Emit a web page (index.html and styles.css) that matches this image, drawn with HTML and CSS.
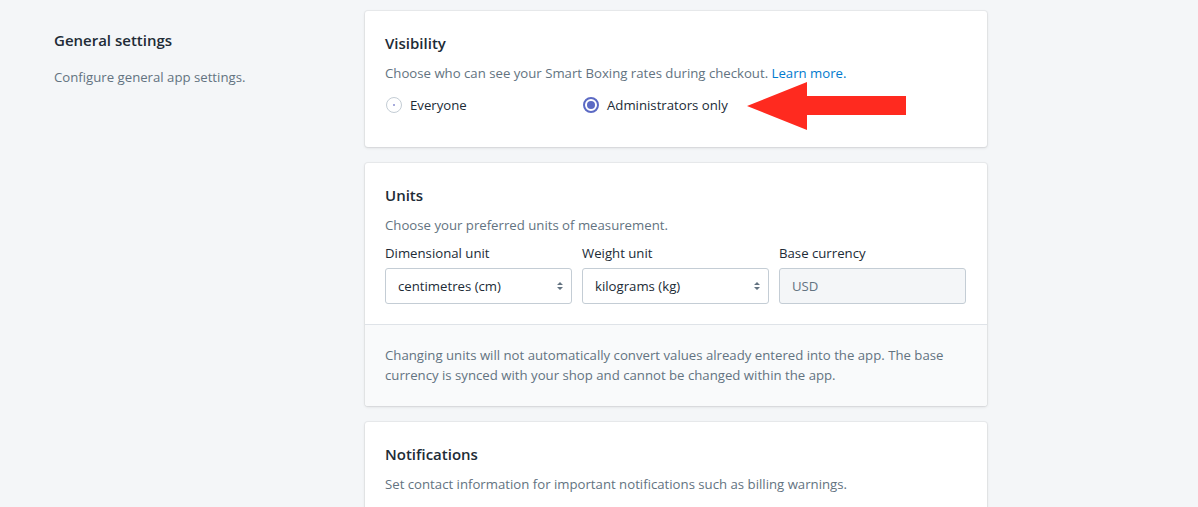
FILE: index.html
```html
<!DOCTYPE html>
<html lang="en">
<head>
<meta charset="utf-8">
<title>Settings</title>
<link rel="stylesheet" href="styles.css">
</head>
<body>
<div class="page">
  <div class="annotation">
    <h2 class="annotation-title">General settings</h2>
    <p class="annotation-desc">Configure general app settings.</p>
  </div>
  <div class="cards">
    <section class="card">
      <div class="card-section card-visibility">
        <h3 class="card-title">Visibility</h3>
        <p class="subdued">Choose who can see your Smart Boxing rates during checkout. <a class="link" href="#">Learn more.</a></p>
        <div class="grid3 radios">
          <label class="radio"><span class="radio-circle"></span><span>Everyone</span></label>
          <label class="radio"><span class="radio-circle checked"></span><span>Administrators only</span></label>
        </div>
      </div>
      <svg class="arrow" width="160" height="50" viewBox="0 0 160 50"><polygon points="0,24 60,0 60,14 159,14 159,33 60,33 60,48" fill="#ff2a1f"/></svg>
    </section>

    <section class="card">
      <div class="card-section">
        <h3 class="card-title">Units</h3>
        <p class="subdued">Choose your preferred units of measurement.</p>
        <div class="grid3 fields">
          <div class="field">
            <div class="label">Dimensional unit</div>
            <div class="select"><span>centimetres (cm)</span>
              <svg width="10" height="12" viewBox="0 0 10 12"><path d="M5 2 L8 5 H2 Z M5 10 L2 7 H8 Z" fill="#637381"/></svg>
            </div>
          </div>
          <div class="field">
            <div class="label">Weight unit</div>
            <div class="select"><span>kilograms (kg)</span>
              <svg width="10" height="12" viewBox="0 0 10 12"><path d="M5 2 L8 5 H2 Z M5 10 L2 7 H8 Z" fill="#637381"/></svg>
            </div>
          </div>
          <div class="field">
            <div class="label">Base currency</div>
            <div class="select disabled"><span>USD</span></div>
          </div>
        </div>
      </div>
      <div class="card-section subsection">
        <p class="subdued">Changing units will not automatically convert values already entered into the app. The base currency is synced with your shop and cannot be changed within the app.</p>
      </div>
    </section>

    <section class="card">
      <div class="card-section">
        <h3 class="card-title">Notifications</h3>
        <p class="subdued">Set contact information for important notifications such as billing warnings.</p>
      </div>
    </section>
  </div>
</div>
</body>
</html>
```

FILE: styles.css
```css
* { box-sizing: border-box; }
html, body { margin: 0; padding: 0; }
body {
  background: #f4f6f8;
  font-family: "Open Sans", "Noto Sans", sans-serif;
  font-size: 14px;
  line-height: 20px;
  color: #212b36;
  overflow: hidden;
}
.page {
  display: flex;
  gap: 20px;
  padding: 11px 0 0 54px;
}
.annotation {
  width: 291px;
  flex: none;
  padding-top: 17px;
}
.annotation-title {
  margin: 0;
  font-size: 15px;
  line-height: 24px;
  font-weight: 600;
  color: #212b36;
}
.annotation-desc {
  margin: 15px 0 0;
  color: #637381;
  font-size: 13.2px;
}
.cards {
  width: 622px;
  flex: none;
  display: flex;
  flex-direction: column;
  gap: 16px;
}
.card {
  position: relative;
  background: #fff;
  border-radius: 3px;
  box-shadow: 0 0 0 1px rgba(63,63,68,.05), 0 1px 3px 0 rgba(63,63,68,.15);
}
.card-section { padding: 20px; }
.card-visibility { padding-bottom: 32px; }
.card-title {
  margin: 0;
  font-size: 15px;
  line-height: 24px;
  font-weight: 600;
}
.subdued {
  margin: 8px 0 0;
  color: #637381;
  font-size: 13.2px;
}
.link { color: #007ace; text-decoration: none; }
.grid3 {
  display: grid;
  grid-template-columns: repeat(3, 187px);
  column-gap: 10px;
}
.radios { margin-top: 12px; }
.radio {
  display: flex;
  align-items: center;
  gap: 8px;
  color: #212b36;
  font-size: 13.2px;
}
.radio-circle {
  width: 16px; height: 16px;
  border-radius: 50%;
  border: 1px solid #c4cdd5;
  position: relative;
  flex: none;
  margin-left: 1px;
}
.radio-circle::after {
  content: "";
  position: absolute;
  left: 50%; top: 50%;
  width: 2px; height: 2px;
  margin: -1px 0 0 -1px;
  border-radius: 50%;
  background: #8a8fd0;
}
.radio-circle.checked { border: 2px solid #5c6ac4; }
.radio-circle.checked::after {
  width: 8px; height: 8px;
  margin: -4px 0 0 -4px;
  background: #5c6ac4;
}
.arrow {
  position: absolute;
  left: 382px;
  top: 71px;
}
.fields { margin-top: 8px; }
.label { font-size: 13.2px; margin-bottom: 5px; }
.select {
  height: 36px;
  border: 1px solid #c4cdd5;
  border-radius: 3px;
  display: flex;
  align-items: center;
  justify-content: space-between;
  padding: 0 6px 0 12px;
  font-size: 13.2px;
  color: #212b36;
  background: #fff;
}
.select.disabled {
  background: #f4f6f8;
  color: #637381;
}
.subsection {
  background: #f9fafb;
  border-top: 1px solid #dfe3e8;
  border-radius: 0 0 3px 3px;
  padding-bottom: 21px;
}
.subsection .subdued { margin: 0; }
```
